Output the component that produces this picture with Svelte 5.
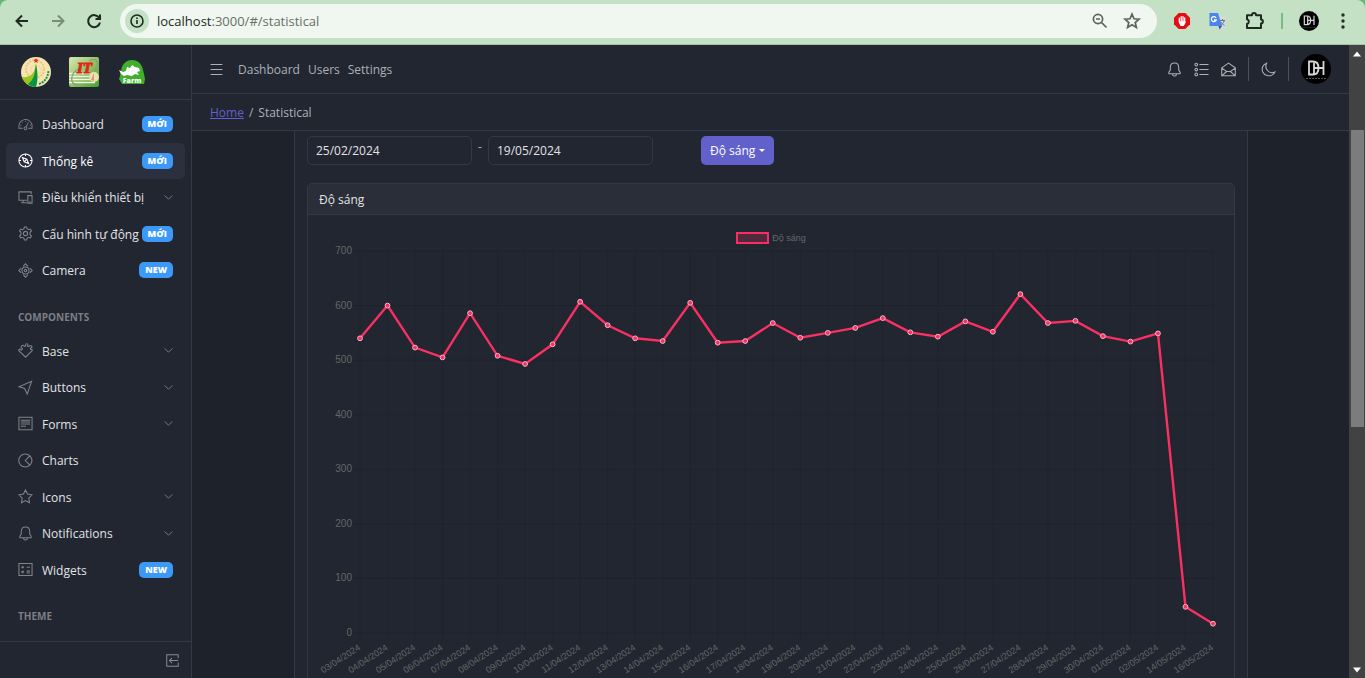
<script>
  const mainItems = [
    { icon: 'speed', label: 'Dashboard', badge: 'MỚI' },
    { icon: 'compass', label: 'Thống kê', badge: 'MỚI', active: true },
    { icon: 'devices', label: 'Điều khiển thiết bị', group: true },
    { icon: 'gear', label: 'Cấu hình tự động', badge: 'MỚI' },
    { icon: 'camera', label: 'Camera', badge: 'NEW' }
  ];
  const componentItems = [
    { icon: 'puzzle', label: 'Base', group: true },
    { icon: 'cursor', label: 'Buttons', group: true },
    { icon: 'notes', label: 'Forms', group: true },
    { icon: 'pie', label: 'Charts' },
    { icon: 'star', label: 'Icons', group: true },
    { icon: 'bell', label: 'Notifications', group: true },
    { icon: 'calc', label: 'Widgets', badge: 'NEW' }
  ];

  const values = [
    540, 600, 523, 505, 586, 508, 493, 529, 607, 564, 540, 535, 605, 532, 535, 568,
    541, 550, 559, 577, 551, 543, 571, 552, 621, 568, 572, 544, 534, 549, 48, 17
  ];
  const pad = (n) => String(n).padStart(2, '0');
  const dates = [
    ...Array.from({ length: 28 }, (_, i) => `${pad(i + 3)}/04/2024`),
    '01/05/2024', '02/05/2024', '14/05/2024', '16/05/2024'
  ];
  const ticks = [0, 100, 200, 300, 400, 500, 600, 700];

  let width = $state(902);
  let height = $derived(Math.round(width / 2) - 10);
  let left = 40;
  let right = $derived(width - 9);
  let top = 13;
  let bottom = $derived(height - 46);
  const x = (i) => left + ((right - left) * i) / (dates.length - 1);
  const y = (v) => bottom - ((bottom - top) * v) / 700;
  let line = $derived(values.map((v, i) => `${x(i)},${y(v)}`).join(' '));

  let from = $state('25/02/2024');
  let to = $state('19/05/2024');
</script>

{#snippet icon(name)}
  <svg class="icon" viewBox="0 0 512 512" aria-hidden="true">
    {#if name === 'speed'}
      <path class="solid" d="M425.706,142.294A240,240,0,0,0,16,312v88H160V368H48V312c0-114.691,93.309-208,208-208s208,93.309,208,208v56H352v32H496V312A238.432,238.432,0,0,0,425.706,142.294ZM80,264h32v32H80ZM240,128h32v32H240ZM136,168h32v32H136ZM400,264h32v32H400ZM297.222,335.1l69.2-144.173-28.85-13.848L268.389,321.214A64.141,64.141,0,1,0,297.222,335.1ZM256,416a32,32,0,1,1,32-32A32.036,32.036,0,0,1,256,416Z" />
    {:else if name === 'compass'}
      <circle cx="256" cy="256" r="224" />
      <path d="M256 32v72M256 408v72M32 256h72M408 256h72M150 150l150 62 62 150-150-62ZM212 300l88-88" />
    {:else if name === 'devices'}
      <path d="M304 352H32V64h416v80M176 352v80M104 432h200M336 192h144v256H336ZM384 400h48" />
    {:else if name === 'gear'}
      <circle cx="256" cy="256" r="72" />
      <path d="M218 32h76l14 62 52 30 62-20 38 66-48 46v80l48 46-38 66-62-20-52 30-14 62h-76l-14-62-52-30-62 20-38-66 48-46v-80l-48-46 38-66 62 20 52-30Z" />
    {:else if name === 'camera'}
      <circle cx="256" cy="256" r="120" />
      <circle cx="256" cy="256" r="44" />
      <path d="M176 112l80-88 80 88M176 400l80 88 80-88M112 176l-88 80 88 80M400 176l88 80-88 80" />
    {:else if name === 'puzzle'}
      <path d="M256 484L28 264c-14-50 40-70 66-40 36 32 70-8 44-40-26-24-42-44-22-70 14-26 48-46 76-30 8 30 46 44 64 16 6-26-4-52 24-70 40-22 72 16 52 54-14 34 24 52 50 26 24-30 62-26 80-6 34 34 6 62-30 70-26 26-6 56 30 48 24-2 30 24 22 42Z" />
    {:else if name === 'cursor'}
      <path d="M464 40L32 232l192 56 92 192Z" />
    {:else if name === 'notes'}
      <path d="M32 40h448v432H32ZM96 144h320M96 208h320M96 272h320M96 352h176" />
    {:else if name === 'pie'}
      <path d="M405 99A222 222 0 1 0 405 413L248 256ZM405 99C500 200 500 310 405 413" />
    {:else if name === 'star'}
      <path d="M256 32l70 142 154 24-112 112 26 160-138-76-138 76 26-160L32 198l154-24Z" />
    {:else if name === 'bell'}
      <path d="M64 400v-52l48-72v-84c0-96 64-160 144-160s144 64 144 160v84l48 72v52ZM188 408c4 92 132 92 136 0" />
    {:else if name === 'calc'}
      <path d="M32 48h448v416H32ZM112 176h96M160 128v96M296 176h112M120 300l80 80M200 300l-80 80M296 312h112M296 376h112" />
    {:else if name === 'chevron'}
      <path d="M40 140l216 216 216-216" />
    {:else if name === 'menu'}
      <path d="M24 60h464M24 256h464M24 452h464" />
    {:else if name === 'list'}
      <circle cx="76" cy="88" r="46" /><circle cx="76" cy="256" r="46" /><circle cx="76" cy="424" r="46" />
      <path d="M184 88h312M184 256h312M184 424h312" />
    {:else if name === 'mail'}
      <path d="M24 200L256 40l232 160v272H24ZM24 208l168 116h128l168-116M24 472l168-148M488 472L320 324" />
    {:else if name === 'moon'}
      <path d="M190 40C60 80 10 220 60 340c60 130 230 170 340 90 36-26 60-60 72-90-90 40-190 20-250-50-60-66-70-164-32-250Z" />
    {:else if name === 'exit'}
      <path d="M480 170V30H30v452h450V342M480 256H150M240 152L136 256l104 104" />
    {/if}
  </svg>
{/snippet}

{#snippet initials()}
  <svg class="initials" viewBox="0 0 30 30" aria-label="DH">
    <circle cx="15" cy="15" r="15" fill="#000" />
    <path d="M8 7.500h4q5.500 0 5.500 6.500t-5.500 6.500h-4ZM13 8v12M13 14h9.500M22.500 7v14" fill="none" stroke="#d8d8d8" stroke-width="1.800" />
    <path d="M5 24.500h20" stroke="#555" stroke-dasharray="2 1" />
  </svg>
{/snippet}

{#snippet rows(items)}
  {#each items as item}
    <li>
      <a href="#/{item.icon}" class:active={item.active}>
        {@render icon(item.icon)}
        <span class="label">{item.label}</span>
        {#if item.badge}<span class="badge">{item.badge}</span>{/if}
        {#if item.group}<span class="chev">{@render icon('chevron')}</span>{/if}
      </a>
    </li>
  {/each}
{/snippet}

<div class="window">
  <div class="frame">
    <div class="toolbar">
      <button aria-label="Back"><svg viewBox="0 0 20 20"><path d="M16 10H5M10 4.500L4.500 10l5.500 5.500" /></svg></button>
      <button aria-label="Forward" class="off"><svg viewBox="0 0 20 20"><path d="M4 10h11M10 4.500l5.500 5.500-5.500 5.500" /></svg></button>
      <button aria-label="Reload"><svg viewBox="0 0 20 20"><path d="M15.300 7A6 6 0 1 0 16 11.500M16 3.500V8h-4.500" /></svg></button>
      <div class="address">
        <span class="info"><svg viewBox="0 0 24 24"><circle cx="12" cy="12" r="6" /><path d="M12 11v4M12 8.500v1.500" /></svg></span>
        <span class="url"><b>localhost</b>:3000/#/statistical</span>
        <button aria-label="Zoom"><svg viewBox="0 0 20 20"><circle cx="8" cy="8" r="4.600" /><path d="M11.500 11.500l5 5M6 8h4" /></svg></button>
        <button aria-label="Bookmark"><svg viewBox="0 0 20 20"><path d="M10 3.200l2 4.600 5 .4-3.800 3.300 1.200 4.900-4.400-2.600-4.400 2.600 1.200-4.900L3 8.200l5-.4Z" /></svg></button>
      </div>
      <div class="extensions">
        <svg width="18" height="18" viewBox="0 0 18 18"><path d="M5.700 1h6.600L17 5.700v6.600L12.300 17H5.700L1 12.300V5.700Z" fill="#e40d12" /><path d="M6.300 10V6.200M8.200 9V4.700M10 9V4.700M11.700 10V6M6.300 10l1.500 3.300h2.700l1.700-3.300Z" stroke="#fff" stroke-width="1.300" stroke-linecap="round" stroke-linejoin="round" fill="#fff" /></svg>
        <svg width="20" height="20" viewBox="0 0 20 20"><path d="M9 5h9.500v13.500H12Z" fill="#d5d9dc" /><path d="M2.500 2H11l4 13H2.500Z" fill="#4a85ee" /><path d="M11.500 15H15l-2.500 3.500Z" fill="#2757b8" /><path d="M13 9.500h5M15.500 8v1.500M17.300 9.500c-.6 2.500-2 3.800-3.400 4.500M14 11c1 1.800 2 2.500 3.500 3.300" fill="none" stroke="#6b7780" /><path d="M9 6.800A2.500 2.500 0 1 0 9.200 9H7" fill="none" stroke="#fff" stroke-width="1.300" /></svg>
        <svg width="22" height="22" viewBox="0 0 22 22"><path d="M4 5.200h5c0-3 4-3 4 0h5V9.500c2.500 0 2.500 4 0 4v4.500H4v-4c2.500-.8 2.500-4 0-4.800Z" fill="none" stroke="#1e2a20" stroke-width="2" stroke-linejoin="round" /></svg>
        <span class="rule"></span>
        <span class="profile">{@render initials()}</span>
        <svg width="16" height="20" viewBox="0 0 16 20"><circle cx="8" cy="4" r="1.700" fill="#222d24" /><circle cx="8" cy="10" r="1.700" fill="#222d24" /><circle cx="8" cy="16" r="1.700" fill="#222d24" /></svg>
      </div>
    </div>
  </div>

  <div class="page">
    <aside>
      <div class="brand">
        <svg viewBox="0 0 30 30" aria-label="Logo">
          <circle cx="15" cy="15" r="15" fill="#f6e5b0" /><circle cx="14" cy="12" r="9" fill="none" stroke="#ecc980" stroke-width="2" stroke-dasharray="2 1" /><circle cx="15" cy="13" r="5" fill="none" stroke="#e9ca88" stroke-dasharray="1 1" />
          <path d="M14.500 7C14 17 9 21 1 20c2 6 7 10 13 10 2-5 2-14 .5-23Z" fill="#9cc51b" /><path d="M15 7c-1 9-2 16-8 20 2 2 5 3 8 3 2-6 2-14 0-23Z" fill="#079447" />
          <path d="M18 27c6-2 9-7 9.500-13" fill="none" stroke="#16935a" stroke-width="2" stroke-dasharray="2 1" /><path d="M15 1l.8 1.600 1.800.2-1.300 1.300.3 1.900-1.600-.9-1.600.9.3-1.900-1.300-1.300 1.800-.2Z" fill="#e52d20" />
        </svg>
        <svg viewBox="0 0 30 30" aria-label="IT">
          <defs><linearGradient id="green" x2="1" y2="1"><stop stop-color="#d9e8ba" /><stop offset=".45" stop-color="#9bc768" /><stop offset="1" stop-color="#45a02b" /></linearGradient></defs>
          <rect width="30" height="30" rx="2" fill="url(#green)" /><path d="M0 16.500h21M0 19.500h20M0 22.500h21M0 25.500h26" stroke="#f1f8e7" stroke-width="1.500" />
          <path d="M20 4c8-5 11 3 6 10M10 12C1 16 0 28 9 28" fill="none" stroke="#8a9c80" stroke-width="1.300" />
          <text x="8" y="16" font-family="Liberation Serif" font-size="15" font-weight="700" font-style="italic" fill="#df251f" stroke="#df251f">IT</text>
          <circle cx="25" cy="20" r="5" fill="#efdcb8" /><path d="M25 16v8l-3-1Z" fill="#d79b62" />
        </svg>
        <svg viewBox="0 0 30 30" aria-label="Farm">
          <path d="M4 14C5 7 9 3 15 3s10 4 11 10l1 4 1 5-1 5H5l-3-5 1-3Z" fill="#3faf2d" />
          <path d="M2 13l4 2 3-1 1-4 3 1 2-3 3 2 4 1 1 3-3 1 2 3-4-1-3 2-5-1-3 1-3-2Z" fill="#fff" />
          <text x="15" y="26" text-anchor="middle" font-size="7" font-weight="800" fill="#fff">Farm</text>
        </svg>
      </div>
      <nav>
        <ul>
          {@render rows(mainItems)}
          <li class="title">COMPONENTS</li>
          {@render rows(componentItems)}
          <li class="title">THEME</li>
        </ul>
      </nav>
      <div class="collapse"><button aria-label="Collapse sidebar">{@render icon('exit')}</button></div>
    </aside>

    <main>
      <header>
        <button aria-label="Toggle menu">{@render icon('menu')}</button>
        <a href="#/dashboard">Dashboard</a>
        <a href="#/users">Users</a>
        <a href="#/settings">Settings</a>
        <div class="tools">
          <button aria-label="Notifications">{@render icon('bell')}</button>
          <button aria-label="Tasks">{@render icon('list')}</button>
          <button aria-label="Messages">{@render icon('mail')}</button>
          <span class="vr"></span>
          <button aria-label="Theme">{@render icon('moon')}</button>
          <span class="vr"></span>
          <button class="avatar" aria-label="Account">{@render initials()}</button>
        </div>
      </header>
      <div class="crumbs"><a href="#/">Home</a><span>/</span><span>Statistical</span></div>

      <div class="scroll">
        <section class="panel">
          <form>
            <input aria-label="From" bind:value={from} />
            <span class="dash">-</span>
            <input aria-label="To" bind:value={to} />
            <button type="button" class="pick">Độ sáng<i></i></button>
          </form>
          <div class="card">
            <h2>Độ sáng</h2>
            <div class="body">
              <div class="legend"><i></i>Độ sáng</div>
              <div class="plot" bind:clientWidth={width}>
                <svg {width} {height} role="img" aria-label="Độ sáng">
                  <g class="grid">
                    {#each ticks as t}<line x1={left - 8} x2={right} y1={y(t)} y2={y(t)} />{/each}
                    {#each dates as _, i}<line x1={x(i)} x2={x(i)} y1={top} y2={bottom + 8} />{/each}
                  </g>
                  <g class="ticks">
                    {#each ticks as t}<text x={left - 8} y={y(t) + 3}>{t}</text>{/each}
                  </g>
                  <g class="dates">
                    {#each dates as d, i}<text transform="translate({x(i) + 1} {bottom + 16}) rotate(-33)">{d}</text>{/each}
                  </g>
                  <polyline points={line} />
                  {#each values as v, i}<circle cx={x(i)} cy={y(v)} r="2.400" />{/each}
                </svg>
              </div>
            </div>
          </div>
        </section>
      </div>
    </main>

    <div class="scrollbar">
      <svg viewBox="0 0 16 16"><path d="M4 11l4-5 4 5Z" /></svg>
      <div class="track"><span class="before"></span><span class="thumb"></span><span class="after"></span></div>
      <svg viewBox="0 0 16 16"><path d="M4 6l4 5 4-5Z" /></svg>
    </div>
  </div>
</div>

<style>
  :global(body) { margin: 0; background: #1e222a; }
  * { box-sizing: border-box; }
  .window { display: flex; flex-direction: column; height: 100vh; overflow: hidden; font: 12px/18px "Open Sans", "Noto Sans", sans-serif; color: #adb0b6; }
  button { display: grid; place-items: center; padding: 0; border: 0; background: none; color: inherit; font: inherit; }
  a { color: inherit; text-decoration: none; }
  ul { margin: 0; padding: 0; list-style: none; }
  .icon { display: block; flex: none; width: 15px; height: 15px; fill: none; stroke: currentColor; stroke-width: 36; }
  .icon .solid { fill: currentColor; stroke: none; }

  .frame { flex: none; background: #68b675; }
  .toolbar { display: flex; align-items: center; gap: 16px; height: 45px; padding: 0 14px 3px 12px; border-bottom: 1px solid #a6c3a8; border-radius: 8px 8px 0 0; background: #c4e1c5; }
  .toolbar button svg, .info svg { display: block; width: 20px; height: 20px; fill: none; stroke: #1e2a20; stroke-width: 2; }
  .toolbar .off { opacity: .45; }
  .address { display: flex; flex: 1; align-items: center; gap: 12px; height: 34px; padding: 0 15px 0 5px; border-radius: 17px; background: #f0f7f0; }
  .info { display: grid; place-items: center; width: 24px; height: 24px; border-radius: 50%; background: #c4e1c5; }
  .info svg { width: 24px; height: 24px; stroke-width: 1.600; }
  .url { flex: 1; margin-left: -4px; font-size: 13px; color: #667068; }
  .url b { font-weight: 400; color: #1c2b20; }
  .address button svg { stroke: #5b635d; stroke-width: 1.700; }
  .extensions { display: flex; align-items: center; gap: 16px; }
  .rule { width: 2px; height: 16px; background: #78bd80; }
  .initials { display: block; width: 100%; }
  .profile { width: 20px; }

  .page { display: flex; flex: 1; min-height: 0; }
  aside { display: flex; flex: none; flex-direction: column; width: 192px; border-right: 1px solid #323a49; background: #212631; color: #e2e3e5; }
  .brand { display: flex; gap: 18px; height: 55px; padding: 12px 21px; border-bottom: 1px solid #323a49; }
  .brand svg { width: 30px; height: 30px; }
  nav { flex: 1; min-height: 0; padding: 6px 6px 9px; }
  nav ul { display: flex; flex-direction: column; height: 100%; }
  nav li { display: flex; flex: 1; }
  nav li.title { flex: none; height: 44px; padding: 19px 12px 0; font-size: 10px; font-weight: 700; color: #7c7f85; }
  nav a { display: flex; flex: 1; align-items: center; padding: 0 12px; border-radius: 5px; }
  nav .icon { color: #7f838a; }
  nav .active { background: #2a303d; color: #fff; }
  nav .active .icon { color: #fff; }
  .label { flex: 1; margin-left: 9px; padding-top: 2px; white-space: nowrap; }
  .badge { padding: 0 6px; border-radius: 5px; background: #3d99f8; color: #fff; font-size: 9px; font-weight: 800; line-height: 16px; }
  nav .chev .icon { width: 9px; height: 9px; stroke-width: 50; }
  .collapse { display: flex; flex: none; justify-content: flex-end; height: 37px; padding-right: 12px; border-top: 1px solid #323a49; color: #868a91; }
  .collapse .icon { width: 13px; height: 13px; stroke-width: 40; }

  main { display: flex; flex: 1; flex-direction: column; min-width: 0; background: #1e222a; }
  header { display: flex; flex: none; align-items: center; gap: 8px; height: 49px; padding: 0 18px; border-bottom: 1px solid #323a49; background: #212631; }
  header > a { padding-top: 2px; }
  header > button { margin-right: 7px; }
  header > button .icon { width: 13px; height: 13px; stroke-width: 40; }
  .tools { display: flex; align-items: center; gap: 12px; margin-left: auto; }
  .vr { width: 1px; height: 24px; background: #4b505a; }
  .avatar { width: 30px; height: 30px; }
  .crumbs { display: flex; flex: none; align-items: center; gap: 5px; height: 37px; padding: 2px 18px 0; border-bottom: 1px solid #323a49; background: #212631; }
  .crumbs a { color: #6261cc; text-decoration: underline; }
  .scroll { flex: 1; min-height: 0; padding: 0 101px 0 102px; overflow: hidden; }
  .panel { padding: 5px 12px 24px; border: solid #323a49; border-width: 0 1px; background: #212631; }
  form { display: flex; margin-bottom: 18px; }
  input { width: 165px; height: 29px; padding: 0 8px; border: 1px solid #323a49; border-radius: 5px; background: #212631; color: #e2e3e5; font: inherit; }
  .dash { width: 16px; padding-top: 2px; text-align: center; }
  .pick { display: flex; align-items: center; gap: 4px; height: 29px; margin-left: 48px; padding: 0 9px; border-radius: 5px; background: #6261cc; color: #fff; }
  .pick i { border: 3px solid transparent; border-top-color: #fff; border-bottom: 0; }
  .card { border: 1px solid #323a49; border-radius: 5px; overflow: hidden; }
  h2 { margin: 0; padding: 7px 11px 5px; border-bottom: 1px solid #323a49; background: #292e39; color: #e2e3e5; font: inherit; }
  .body { padding: 17px 12px; color: #666; font: 9px/12px "Liberation Sans", Arial, sans-serif; }
  .legend { display: flex; justify-content: center; gap: 3px; height: 6px; }
  .legend i { width: 33px; height: 12px; border: 2px solid #f52f61; background: #51293e; }
  .plot svg { display: block; }
  .grid { stroke: #000; stroke-opacity: .09; }
  .ticks text, .dates text { fill: #666; text-anchor: end; }
  .ticks text { font-size: 10px; }
  polyline { fill: none; stroke: #fa3062; stroke-width: 2.400; }
  .plot circle { fill: #fa3062; stroke: #f0b9c8; stroke-width: 1; }

  .scrollbar { display: flex; flex: none; flex-direction: column; width: 16px; background: #424242; }
  .scrollbar svg { width: 16px; height: 17px; fill: #fff; }
  .track { display: flex; flex: 1; flex-direction: column; }
  .before { flex: 68; }
  .thumb { flex: 297; margin: 0 1px 0 2px; background: #7c7c7c; }
  .after { flex: 234; }
</style>
